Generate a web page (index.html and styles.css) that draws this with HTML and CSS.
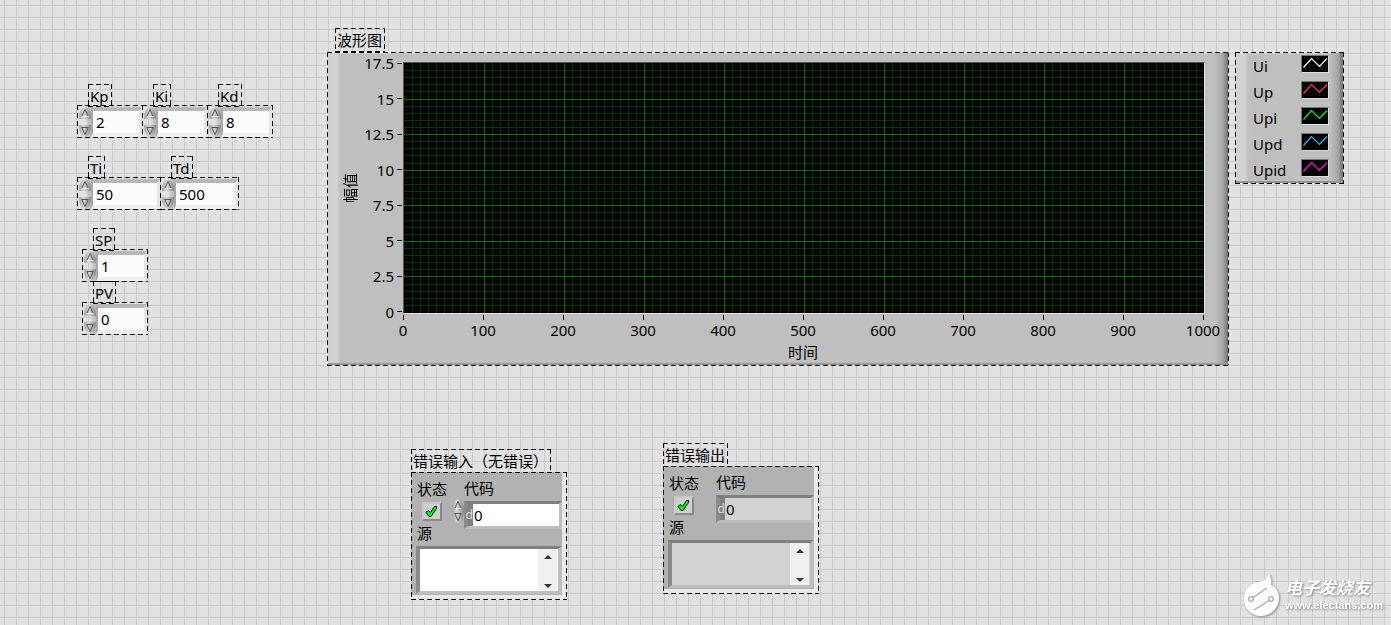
FILE: index.html
```html
<!DOCTYPE html>
<html lang="zh-CN">
<head>
  <meta charset="UTF-8">
  <meta name="viewport" content="width=device-width, initial-scale=1.0">
  <title>PID</title>
  <link rel="stylesheet" href="styles.css">
</head>
<body>
  <svg class="defs" width="0" height="0" aria-hidden="true">
    <symbol id="up" viewBox="0 0 12 12"><path d="M3 9 6 2.500 9 9" fill="none" stroke="#555"/><path d="M3 9.500h6.500" stroke="#f4f4f4"/></symbol>
    <symbol id="down" viewBox="0 0 12 12"><path d="M3 3 6 9.500 9 3" fill="none" stroke="#555"/><path d="M2.500 2.500h7" stroke="#555"/></symbol>
    <symbol id="check" viewBox="0 0 15 15"><path d="M2 8.500 4 6.500 6.500 8.500 10.500 2.500 12.500 2.500 12.500 4.500 7 12.500 5 12.500Z" fill="#0f0" stroke="#000" stroke-width="1"/></symbol>
    <symbol id="wave" viewBox="0 0 26 16"><path d="M1.500 11.500 9.500 2.500 17.500 10.500 25 2.500" fill="none" stroke="currentColor" stroke-width="1.200"/></symbol>
  </svg>

  <main>
    <div class="top">
      <form class="controls">
        <div class="row">
          <div class="control">
            <label class="tag dashed" for="kp">Kp</label>
            <div class="number dashed">
              <div class="spin"><button type="button" aria-label="+"><svg><use href="#up"/></svg></button><button type="button" aria-label="-"><svg><use href="#down"/></svg></button></div>
              <input id="kp" type="text" value="2">
            </div>
          </div>
          <div class="control">
            <label class="tag dashed" for="ki">Ki</label>
            <div class="number dashed">
              <div class="spin"><button type="button" aria-label="+"><svg><use href="#up"/></svg></button><button type="button" aria-label="-"><svg><use href="#down"/></svg></button></div>
              <input id="ki" type="text" value="8">
            </div>
          </div>
          <div class="control">
            <label class="tag dashed" for="kd">Kd</label>
            <div class="number dashed">
              <div class="spin"><button type="button" aria-label="+"><svg><use href="#up"/></svg></button><button type="button" aria-label="-"><svg><use href="#down"/></svg></button></div>
              <input id="kd" type="text" value="8">
            </div>
          </div>
        </div>
        <div class="row">
          <div class="control wide">
            <label class="tag dashed" for="ti">Ti</label>
            <div class="number dashed">
              <div class="spin"><button type="button" aria-label="+"><svg><use href="#up"/></svg></button><button type="button" aria-label="-"><svg><use href="#down"/></svg></button></div>
              <input id="ti" type="text" value="50">
            </div>
          </div>
          <div class="control medium">
            <label class="tag dashed" for="td">Td</label>
            <div class="number dashed">
              <div class="spin"><button type="button" aria-label="+"><svg><use href="#up"/></svg></button><button type="button" aria-label="-"><svg><use href="#down"/></svg></button></div>
              <input id="td" type="text" value="500">
            </div>
          </div>
        </div>
        <div class="stack">
          <div class="control">
            <label class="tag dashed" for="sp">SP</label>
            <div class="number dashed">
              <div class="spin"><button type="button" aria-label="+"><svg><use href="#up"/></svg></button><button type="button" aria-label="-"><svg><use href="#down"/></svg></button></div>
              <input id="sp" type="text" value="1">
            </div>
          </div>
          <div class="control">
            <label class="tag dashed" for="pv">PV</label>
            <div class="number dashed">
              <div class="spin"><button type="button" aria-label="+"><svg><use href="#up"/></svg></button><button type="button" aria-label="-"><svg><use href="#down"/></svg></button></div>
              <input id="pv" type="text" value="0">
            </div>
          </div>
        </div>
      </form>

      <section class="graph">
        <h2 class="title dashed">波形图</h2>
        <div class="panel chart dashed">
          <div class="y-name">幅值</div>
          <ul class="y-axis">
            <li>17.5</li><li>15</li><li>12.5</li><li>10</li><li>7.5</li><li>5</li><li>2.5</li><li>0</li>
          </ul>
          <div class="plot"><canvas id="plot"></canvas></div>
          <ul class="x-axis">
            <li>0</li><li>100</li><li>200</li><li>300</li><li>400</li><li>500</li><li>600</li><li>700</li><li>800</li><li>900</li><li>1000</li>
          </ul>
          <div class="x-name">时间</div>
        </div>
      </section>

      <ul class="panel legend dashed">
        <li>Ui <svg class="ui"><use href="#wave"/></svg></li>
        <li>Up <svg class="up"><use href="#wave"/></svg></li>
        <li>Upi <svg class="upi"><use href="#wave"/></svg></li>
        <li>Upd <svg class="upd"><use href="#wave"/></svg></li>
        <li>Upid <svg class="upid"><use href="#wave"/></svg></li>
      </ul>
    </div>

    <div class="bottom">
      <section class="error error-in">
        <h2 class="title dashed">错误输入<span class="paren">（</span>无错误<span class="paren">）</span></h2>
        <div class="cluster dashed">
          <div class="fields">
            <div class="status">
              <label for="status-in">状态</label>
              <div class="led"><input id="status-in" type="checkbox" checked><svg><use href="#check"/></svg></div>
            </div>
            <div class="code">
              <label for="code-in">代码</label>
              <div class="code-line">
                <div class="spin oval"><button type="button" aria-label="+"><svg><use href="#up"/></svg></button><button type="button" aria-label="-"><svg><use href="#down"/></svg></button></div>
                <div class="code-box"><span>d</span><input id="code-in" type="text" value="0"></div>
              </div>
            </div>
          </div>
          <label class="source-name" for="source-in">源</label>
          <div class="source">
            <textarea id="source-in"></textarea>
            <div class="scroll"><button type="button" class="arrow-up" aria-label="▲"></button><button type="button" class="arrow-down" aria-label="▼"></button></div>
          </div>
        </div>
      </section>

      <section class="error error-out">
        <h2 class="title dashed">错误输出</h2>
        <div class="cluster dashed">
          <div class="fields">
            <div class="status">
              <label for="status-out">状态</label>
              <div class="led"><input id="status-out" type="checkbox" checked><svg><use href="#check"/></svg></div>
            </div>
            <div class="code">
              <label for="code-out">代码</label>
              <div class="code-line">
                <div class="code-box"><span>d</span><input id="code-out" type="text" value="0" readonly></div>
              </div>
            </div>
          </div>
          <label class="source-name" for="source-out">源</label>
          <div class="source">
            <textarea id="source-out" readonly></textarea>
            <div class="scroll"><button type="button" class="arrow-up" aria-label="▲"></button><button type="button" class="arrow-down" aria-label="▼"></button></div>
          </div>
        </div>
      </section>

      <footer>
        <svg viewBox="0 0 38 46">
          <path d="M26 1C27 5 29 8 28 13C34 16 36 21 36 26C36 36 28 44 18 44C8 44 1 36 1 27C1 17 8 11 16 10C22 9 25 6 26 1Z" fill="#fff"/>
          <g fill="none" stroke="#a8a8a8" stroke-width="1.300">
            <circle cx="8" cy="27" r="2.300"/><path d="M10 25.500 24 16"/>
            <circle cx="28" cy="27" r="2.300"/><path d="M26 28.500 11 38"/>
          </g>
        </svg>
        <div>
          <strong>电子发烧友</strong>
          <span>www.elecfans.com</span>
        </div>
      </footer>
    </div>
  </main>

  <script src="script.js"></script>
</body>
</html>
```

FILE: styles.css
```css
* {
  box-sizing: border-box;
}

body {
  margin: 0;
  background-color: #e2e2e2;
  background-image:
    linear-gradient(90deg, #cacaca 1px, transparent 1px),
    linear-gradient(#cacaca 1px, transparent 1px);
  background-size: 12px 12px;
  background-position: 4px 5px;
  color: #000;
  font: 15px/20px "Noto Sans", "Noto Sans CJK SC", sans-serif;
}

main {
  min-height: 100vh;
  padding-top: 28px;
  display: flex;
  flex-direction: column;
}

ul {
  list-style: none;
  margin: 0;
  padding: 0;
}

button, input, textarea {
  font: inherit;
  color: inherit;
  margin: 0;
  border: 0;
  padding: 0;
}

.defs {
  position: absolute;
}

/* marching ants outline */
.dashed {
  --gap: transparent;
  position: relative;
}

.dashed::after {
  content: "";
  position: absolute;
  inset: 0;
  pointer-events: none;
  background:
    repeating-linear-gradient(90deg, #000 0 5px, var(--gap) 5px 8px) top / 100% 1px no-repeat,
    repeating-linear-gradient(90deg, #000 0 5px, var(--gap) 5px 8px) bottom / 100% 1px no-repeat,
    repeating-linear-gradient(#000 0 5px, var(--gap) 5px 8px) left / 1px 100% no-repeat,
    repeating-linear-gradient(#000 0 5px, var(--gap) 5px 8px) right / 1px 100% no-repeat;
}

.title {
  width: max-content;
  height: 24px;
  margin: 0;
  padding: 2px 3px 0 2px;
  font-size: 15px;
  font-weight: normal;
}

/* centred full-width brackets */
.paren {
  font-family: "Noto Sans CJK TC", sans-serif;
}

.top {
  display: flex;
  align-items: flex-start;
  padding: 0 47px 0 77px;
}

/* numeric controls */
.controls {
  flex: 0 0 250px;
  padding-top: 56px;
  display: flex;
  flex-direction: column;
  gap: 18px;
}

.row {
  display: flex;
}

.stack {
  padding-left: 5px;
}

.control {
  width: 66px;
}

.control.wide {
  width: 84px;
}

.control.medium {
  width: 79px;
}

.row .control + .control {
  margin-left: -1px;
}

.tag {
  display: block;
  width: max-content;
  height: 23px;
  margin-left: 11px;
  padding: 2px 3px 0 2px;
}

.stack .control + .control {
  margin-top: -1px;
}

.number {
  display: flex;
  height: 33px;
  margin-top: -2px;
  padding: 2px 1px 1px 2px;
}

.number input {
  flex: 1;
  min-width: 0;
  padding: 0 3px;
  background: #fbfbfb;
  border: 4px solid;
  border-width: 4px 3px 4px 2px;
  border-color: #b8b8b8 #e6e6e6 #efefef #a8a8a8;
}

.spin {
  width: 12px;
  flex: none;
  display: flex;
  flex-direction: column;
}

.spin button {
  flex: 1;
  min-height: 0;
  display: flex;
  background: linear-gradient(90deg, #a4a4a4, #d6d6d6 40%, #888);
}

.spin button:first-child {
  border-radius: 6px 6px 0 0 / 11px 11px 0 0;
}

.spin button:last-child {
  border-radius: 0 0 6px 6px / 0 0 11px 11px;
}

.number .spin {
  gap: 6px;
  background: linear-gradient(90deg, transparent 50%, #b8b8b8);
}

.spin svg {
  width: 12px;
  height: 12px;
}

/* raised grey plates */
.panel {
  --gap: #fff;
  background:
    linear-gradient(#a0a0a0, #808080) bottom / 100% 3px no-repeat,
    linear-gradient(90deg, #d0d0d0, #d4d4d4 10px, #c6c6c6 12px, #bfbfbf 14px) left / 14px 100% no-repeat,
    linear-gradient(90deg, #bfbfbf, #a6a6a6 8px, #666) right / 14px 100% no-repeat,
    linear-gradient(#cdcdcd, #bfbfbf) top / 100% 3px no-repeat,
    #bfbfbf;
}

.graph {
  flex: 1;
  min-width: 0;
}

.graph .title {
  margin-left: 8px;
}

.chart {
  display: grid;
  grid-template-columns: 15px 45px 1fr;
  grid-template-rows: 252px auto auto;
  padding: 10px 24px 4px 16px;
}

.y-name {
  align-self: center;
  line-height: 15px;
  writing-mode: vertical-rl;
  text-orientation: sideways;
  transform: rotate(180deg);
}

.y-axis {
  display: flex;
  flex-direction: column;
  justify-content: space-between;
  padding: 1px 1px 2px 0;
}

.y-axis li {
  height: 0;
  display: flex;
  align-items: center;
  justify-content: flex-end;
  gap: 3px;
}

.y-axis li::after {
  content: "";
  width: 5px;
  height: 1px;
  background: #000;
}

.plot {
  min-width: 0;
  background: #000;
  border: 1px solid;
  border-color: #555 #e4e4e4 #e4e4e4 #555;
}

.plot canvas {
  display: block;
  width: 100%;
  height: 100%;
}

.x-axis {
  grid-column: 3;
  display: flex;
  justify-content: space-between;
  padding: 1px 2px 0 0;
}

.x-axis li {
  width: 0;
  display: flex;
  flex-direction: column;
  align-items: center;
}

.x-axis li::before {
  content: "";
  width: 1px;
  height: 5px;
  background: #000;
}

.x-name {
  grid-column: 3;
  text-align: center;
  padding: 2px 2px 0 0;
}

.legend {
  flex: 0 0 109px;
  margin: 24px 0 0 6px;
  padding: 1px 15px 1px 18px;
}

.legend li {
  height: 26px;
  display: flex;
  justify-content: space-between;
  align-items: center;
}

.legend svg {
  width: 28px;
  height: 18px;
  margin-bottom: 4px;
  background: #000;
  border: 1px solid;
  border-color: #777 #ddd #ddd #777;
}

.ui { color: #fff; }
.up { color: #ff4040; }
.upi { color: #0f0; }
.upd { color: #40b8ff; }
.upid { color: #ff10e0; }

/* error clusters */
.bottom {
  flex: 1;
  display: flex;
  align-items: flex-start;
  gap: 96px;
  padding: 77px 8px 7px 411px;
}

.error {
  flex: 0 0 156px;
  min-width: 0;
}

.error-in {
  margin-top: 6px;
}

.cluster {
  height: 128px;
  margin-top: -1px;
  padding: 5px;
  background:
    linear-gradient(#e9e9e9, #e9e9e9) right / 5px 100% no-repeat,
    linear-gradient(#e9e9e9, #e9e9e9) bottom / 100% 5px no-repeat,
    #b2b2b2;
}

.fields {
  display: flex;
  justify-content: space-between;
}

.status, .code {
  display: flex;
  flex-direction: column;
}

.status {
  padding: 2px 0 0 1px;
}

.code {
  padding-top: 1px;
}

.code-line {
  display: flex;
  align-items: flex-start;
  padding-top: 3px;
}

.error-in .code label {
  margin-left: 12px;
}

.led {
  position: relative;
  width: 20px;
  height: 19px;
  margin: 3px 0 0 5px;
}

.led input {
  appearance: none;
  display: block;
  width: 100%;
  height: 100%;
  background: #d0d0d0;
  border: 2px solid;
  border-color: #c8c8c8 #8a8a8a #8a8a8a #c8c8c8;
}

.led svg {
  position: absolute;
  inset: 2px;
  width: 15px;
  height: 15px;
  pointer-events: none;
}

.led input:not(:checked) + svg {
  display: none;
}

.spin.oval {
  height: 24px;
  margin-top: -2px;
}

.code-box {
  display: flex;
  width: 98px;
  height: 28px;
  border: 4px solid;
  border-width: 3px 3px 3px 4px;
  border-color: #808080 #bebebe #bebebe #8a8a8a;
  background: #fff;
}

.code-box span {
  width: 5px;
  background: #808080;
  color: #ddd;
  font-size: 12px;
  line-height: 22px;
  direction: rtl;
}

.code-box input {
  flex: 1;
  min-width: 0;
  padding: 0 1px;
  background: transparent;
}

.source-name {
  display: block;
  margin-top: -6px;
  padding-left: 1px;
}

.source {
  display: flex;
  height: 48px;
  margin-top: 3px;
  padding-right: 1px;
  background: #fff;
  border: 4px solid;
  border-width: 3px 4px 3px 4px;
  border-color: #808080 #bebebe #bebebe #8a8a8a;
}

.source textarea {
  flex: 1;
  width: 0;
  min-width: 0;
  resize: none;
  overflow: hidden;
  background: transparent;
}

.scroll {
  width: 19px;
  display: flex;
  flex-direction: column;
  justify-content: space-between;
  align-items: center;
  padding: 6px 0 3px;
  background: #f0f0f0;
}

.scroll button {
  width: 0;
  height: 0;
  border: solid transparent;
}

.scroll .arrow-up {
  border-width: 0 4px 4px;
  border-bottom-color: #333;
}

.scroll .arrow-down {
  border-width: 4px 4px 0;
  border-top-color: #333;
}

.error-out .code-box,
.error-out .source {
  background: #d2d2d2;
}

/* site mark */
footer {
  margin-left: auto;
  align-self: flex-end;
  display: flex;
  align-items: center;
  gap: 4px;
  color: #fff;
  filter: drop-shadow(1px 1px 1px #888);
}

footer svg {
  width: 38px;
  height: 46px;
}

footer strong, footer span {
  display: block;
}

footer strong {
  font-size: 17px;
  font-style: italic;
}

footer span {
  font: bold 11px/14px "Liberation Sans", sans-serif;
}
```

FILE: script.js
```javascript
const canvas = document.getElementById('plot');
const ctx = canvas.getContext('2d');

function lines(xCount, yCount, color) {
  const w = canvas.width;
  const h = canvas.height;
  ctx.fillStyle = color;
  for (let i = 1; i < xCount; i++) {
    ctx.fillRect(Math.round(i * w / xCount), 0, 1, h);
  }
  for (let i = 1; i < yCount; i++) {
    ctx.fillRect(0, Math.round(i * (h - 1) / yCount), w, 1);
  }
}

function draw() {
  canvas.width = canvas.clientWidth;
  canvas.height = canvas.clientHeight;
  lines(100, 35, '#003800');
  lines(10, 7, '#007000');
}

window.addEventListener('resize', draw);
draw();
```
